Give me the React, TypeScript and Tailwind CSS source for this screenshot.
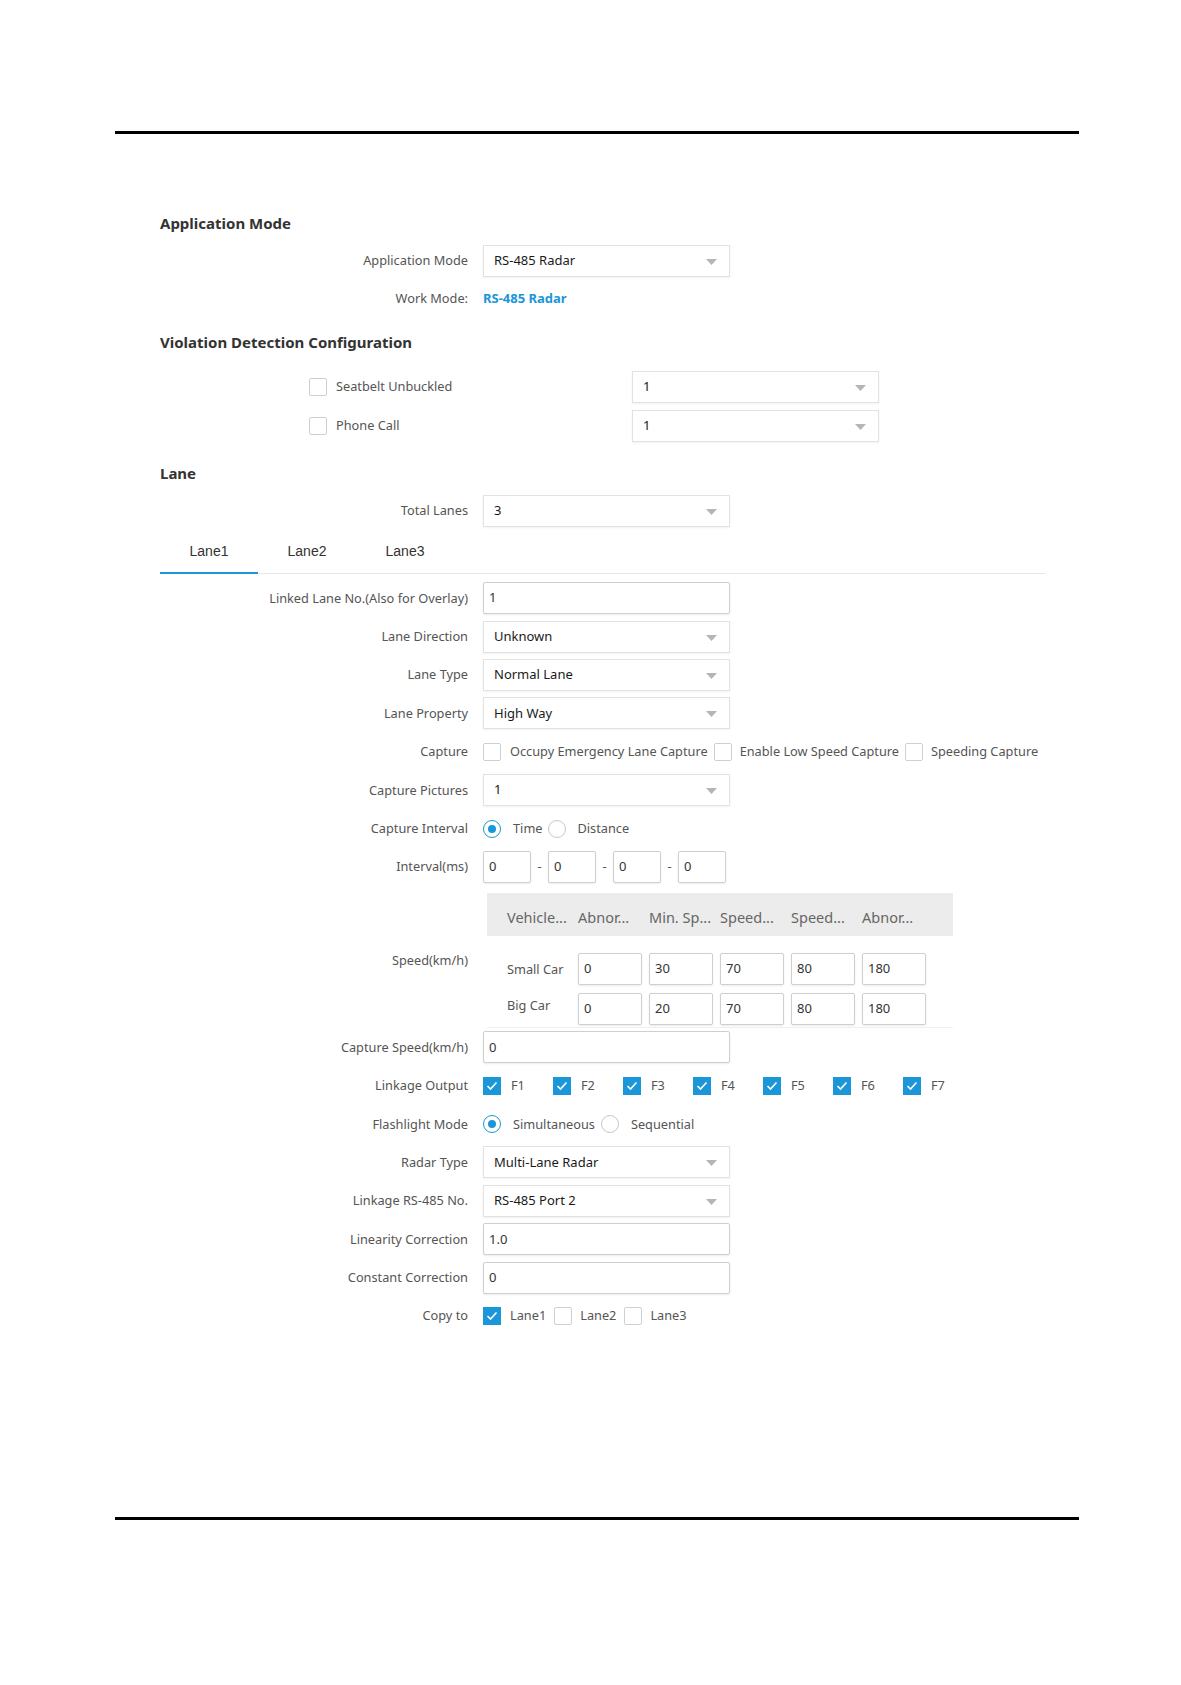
import React from "react";

const F = { fontFamily: '"Noto Sans", "Open Sans", sans-serif' };

function Arrow() {
  return (
    <svg width="11" height="6" viewBox="0 0 11 6" className="absolute right-[12px] top-[13px]">
      <path d="M0 0 L11 0 L5.5 6 Z" fill="#b5b5b5" />
    </svg>
  );
}

function Select({ value, w = "w-[247px]" }: { value: string; w?: string }) {
  return (
    <div className={`relative ${w} h-[32px] border border-[#e2e2e2] bg-white shadow-[0_1px_2px_rgba(0,0,0,0.06)] flex items-center pl-[10px] text-[13px] text-[#1a1a1a]`}>
      {value}
      <Arrow />
    </div>
  );
}

function Input({ value, w = "w-[247px]" }: { value: string; w?: string }) {
  return (
    <div className={`${w} h-[32px] border border-[#cfcfcf] rounded-[2px] bg-white shadow-[0_1px_2px_rgba(0,0,0,0.08)] flex items-center pl-[5px] text-[13px] text-[#333]`}>
      {value}
    </div>
  );
}

function Check({ checked = false }: { checked?: boolean }) {
  if (checked)
    return (
      <div className="w-[18px] h-[18px] bg-[#1b96d8] flex items-center justify-center shrink-0">
        <svg width="12" height="10" viewBox="0 0 12 10">
          <path d="M1.5 5 L4.5 8 L10.5 1.5" stroke="white" strokeWidth="1.6" fill="none" />
        </svg>
      </div>
    );
  return <div className="w-[18px] h-[18px] border border-[#cfcfcf] rounded-[2px] bg-white shrink-0" />;
}

function Radio({ checked = false }: { checked?: boolean }) {
  return (
    <div
      className={`w-[18px] h-[18px] rounded-full border ${checked ? "border-[#1b96d8]" : "border-[#c8c8c8]"} flex items-center justify-center shrink-0 bg-white`}
    >
      {checked && <div className="w-[8px] h-[8px] rounded-full bg-[#1b96d8]" />}
    </div>
  );
}

const T = "text-[12.75px] text-[#555]";

function Row({ label, children, h = "h-[38.4px]", mt = "" }: { label: string; children?: React.ReactNode; h?: string; mt?: string }) {
  return (
    <div className={`flex items-center ${h} ${mt}`}>
      <div className={`w-[308px] text-right ${T} whitespace-nowrap`}>{label}</div>
      <div className="ml-[15px] flex items-center">{children}</div>
    </div>
  );
}

function Heading({ children, mt }: { children: React.ReactNode; mt: string }) {
  return <div className={`h-[24px] flex items-center text-[15px] font-bold text-[#333] ${mt}`}>{children}</div>;
}

export default function App() {
  const speedHeaders = ["Vehicle...", "Abnor...", "Min. Sp...", "Speed...", "Speed...", "Abnor..."];
  const small = ["0", "30", "70", "80", "180"];
  const big = ["0", "20", "70", "80", "180"];
  return (
    <div className="w-[1181px] h-[1685px] bg-white" style={F}>
      <div className="h-[131px]" />
      <div className="ml-[115px] w-[964px] h-[3px] bg-black" />
      <div className="pl-[160px]">
        <Heading mt="mt-[77px]">Application Mode</Heading>
        <Row label="Application Mode" mt="mt-[7px]" h="h-[38px]">
          <Select value="RS-485 Radar" />
        </Row>
        <Row label="Work Mode:" h="h-[38px]">
          <span className="text-[13px] font-bold text-[#1b96d8]">RS-485 Radar</span>
        </Row>
        <Heading mt="mt-[12px]">Violation Detection Configuration</Heading>
        <div className="mt-[13px] h-[39px] flex items-center">
          <div className="ml-[149px] w-[323px] flex items-center gap-[9px]">
            <Check />
            <span className={T}>Seatbelt Unbuckled</span>
          </div>
          <Select value="1" />
        </div>
        <div className="h-[39px] flex items-center">
          <div className="ml-[149px] w-[323px] flex items-center gap-[9px]">
            <Check />
            <span className={T}>Phone Call</span>
          </div>
          <Select value="1" />
        </div>
        <Heading mt="mt-[16px]">Lane</Heading>
        <Row label="Total Lanes" mt="mt-[7px]" h="h-[38px]">
          <Select value="3" />
        </Row>
        <div className="w-[885px] h-[44px] flex items-stretch border-b border-[#e6e6e6]">
          {["Lane1", "Lane2", "Lane3"].map((t, i) => (
            <div
              key={t}
              className={`w-[98px] flex items-center justify-center text-[14px] text-[#333] ${i === 0 ? "border-b-2 border-[#1b96d8] -mb-px" : ""}`}
              style={{ fontFamily: '"Liberation Sans", Arial, sans-serif' }}
            >
              {t}
            </div>
          ))}
        </div>
        <Row label="Linked Lane No.(Also for Overlay)" mt="mt-[5px]">
          <Input value="1" />
        </Row>
        <Row label="Lane Direction">
          <Select value="Unknown" />
        </Row>
        <Row label="Lane Type">
          <Select value="Normal Lane" />
        </Row>
        <Row label="Lane Property">
          <Select value="High Way" />
        </Row>
        <Row label="Capture">
          <Check />
          <span className={`ml-[9px] ${T}`}>Occupy Emergency Lane Capture</span>
          <span className="ml-[6px]"><Check /></span>
          <span className={`ml-[8px] ${T}`}>Enable Low Speed Capture</span>
          <span className="ml-[6px]"><Check /></span>
          <span className={`ml-[8px] ${T}`}>Speeding Capture</span>
        </Row>
        <Row label="Capture Pictures">
          <Select value="1" />
        </Row>
        <Row label="Capture Interval">
          <Radio checked />
          <span className={`ml-[12px] ${T}`}>Time</span>
          <span className="ml-[5px]"><Radio /></span>
          <span className={`ml-[12px] ${T}`}>Distance</span>
        </Row>
        <Row label="Interval(ms)">
          {[0, 1, 2, 3].map((i) => (
            <React.Fragment key={i}>
              {i > 0 && <span className={`w-[17px] text-center ${T}`}>-</span>}
              <Input value="0" w="w-[48px]" />
            </React.Fragment>
          ))}
        </Row>
        <div className="flex">
          <div className={`w-[308px] text-right ${T} pt-[65px]`}>Speed(km/h)</div>
          <div className="ml-[19px] pt-[7px] w-[466px] border-b border-[#f0f0f0]">
            <div className="h-[43px] bg-[#ececec] flex items-end pb-[7px] pl-[20px]">
              {speedHeaders.map((h, i) => (
                <div key={i} className="w-[71px] text-[14.5px] text-[#666] whitespace-nowrap">
                  {h}
                </div>
              ))}
            </div>
            <div className="mt-[18px] h-[30px] flex items-center pl-[20px]">
              <div className={`w-[71px] ${T}`}>Small Car</div>
              {small.map((v, i) => (
                <div key={i} className="w-[71px]">
                  <Input value={v} w="w-[64px] h-[30px]" />
                </div>
              ))}
            </div>
            <div className="mt-[10px] mb-[3px] h-[30px] flex items-center pl-[20px]">
              <div className={`w-[71px] ${T} -mt-[8px]`}>Big Car</div>
              {big.map((v, i) => (
                <div key={i} className="w-[71px]">
                  <Input value={v} w="w-[64px] h-[30px]" />
                </div>
              ))}
            </div>
          </div>
        </div>
        <Row label="Capture Speed(km/h)">
          <Input value="0" />
        </Row>
        <Row label="Linkage Output">
          {["F1", "F2", "F3", "F4", "F5", "F6", "F7"].map((f) => (
            <div key={f} className="w-[70px] flex items-center">
              <Check checked />
              <span className={`ml-[10px] ${T}`}>{f}</span>
            </div>
          ))}
        </Row>
        <Row label="Flashlight Mode">
          <Radio checked />
          <span className={`ml-[12px] ${T}`}>Simultaneous</span>
          <span className="ml-[6px]"><Radio /></span>
          <span className={`ml-[12px] ${T}`}>Sequential</span>
        </Row>
        <Row label="Radar Type">
          <Select value="Multi-Lane Radar" />
        </Row>
        <Row label="Linkage RS-485 No.">
          <Select value="RS-485 Port 2" />
        </Row>
        <Row label="Linearity Correction">
          <Input value="1.0" />
        </Row>
        <Row label="Constant Correction">
          <Input value="0" />
        </Row>
        <Row label="Copy to">
          <Check checked />
          <span className={`ml-[9px] ${T}`}>Lane1</span>
          <span className="ml-[8px]"><Check /></span>
          <span className={`ml-[8px] ${T}`}>Lane2</span>
          <span className="ml-[8px]"><Check /></span>
          <span className={`ml-[8px] ${T}`}>Lane3</span>
        </Row>
      </div>
      <div className="mt-[182px] ml-[115px] w-[964px] h-[3px] bg-black" />
    </div>
  );
}
